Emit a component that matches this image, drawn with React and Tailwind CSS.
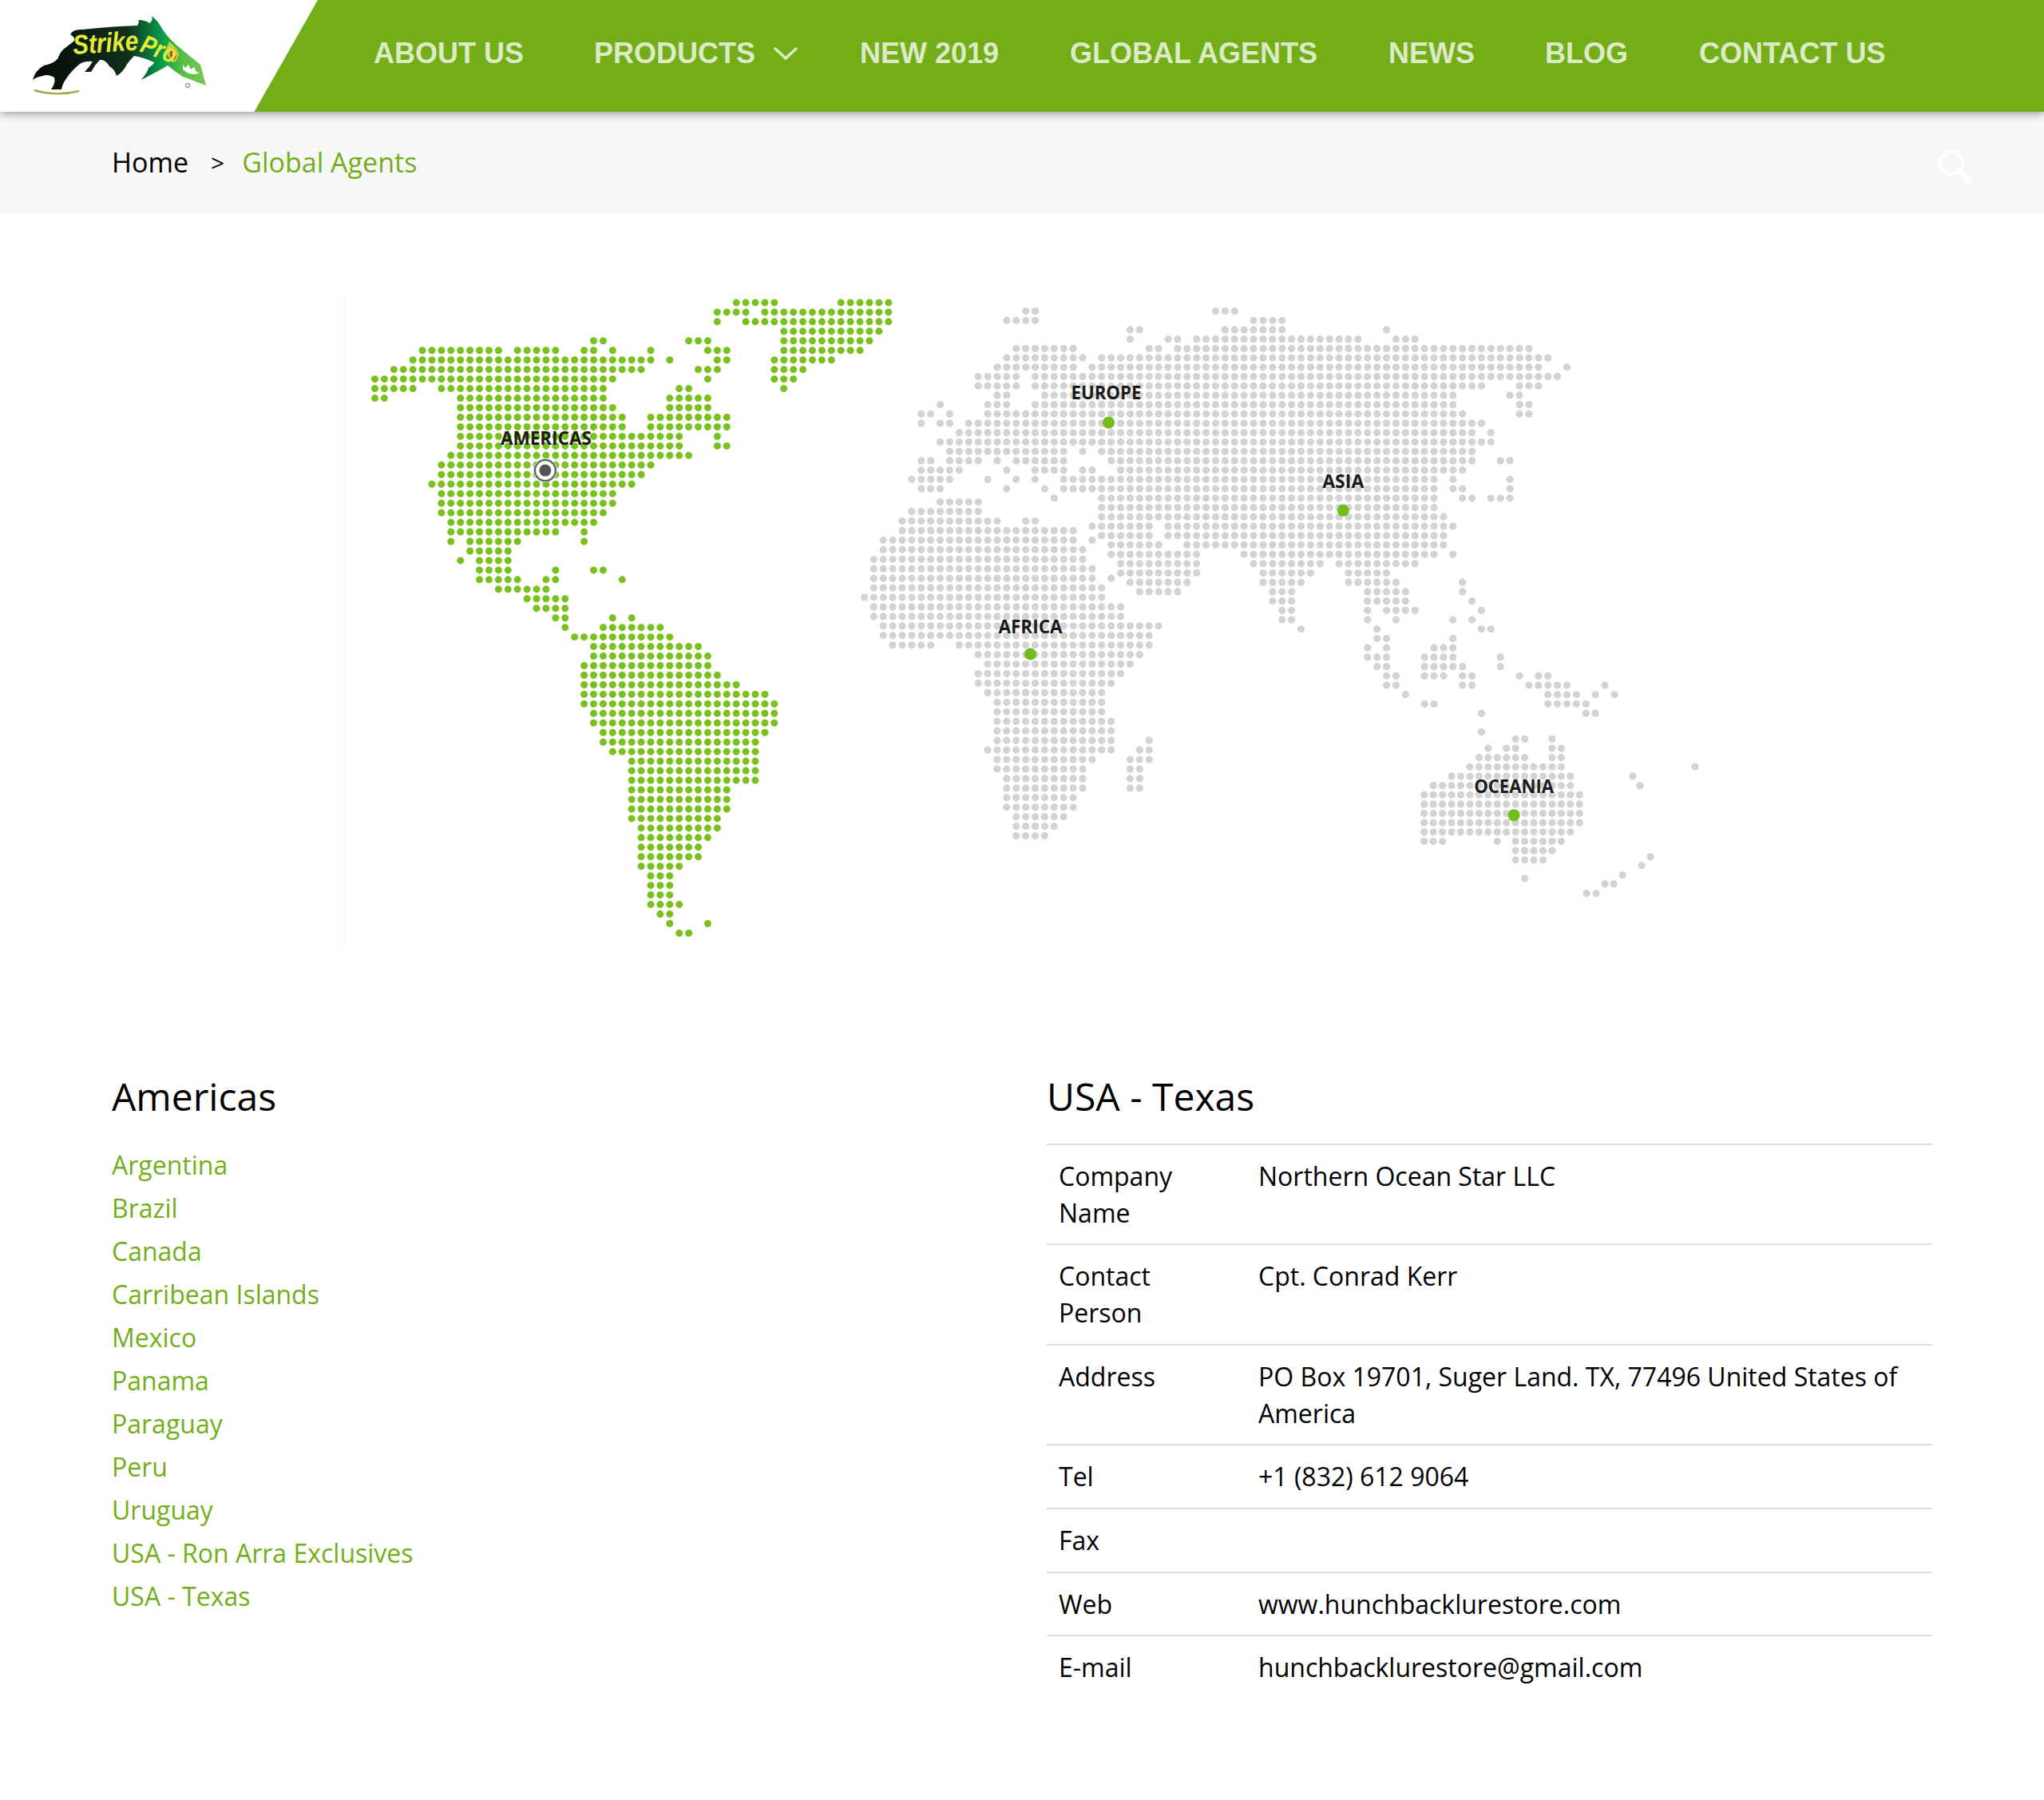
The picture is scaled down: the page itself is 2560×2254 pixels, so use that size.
import React from "react";

const NAV = [
  { label: "ABOUT US", ml: "ml-[70px]" },
  { label: "PRODUCTS", ml: "ml-[88px]", caret: true },
  { label: "NEW 2019", ml: "ml-[77px]" },
  { label: "GLOBAL AGENTS", ml: "ml-[89px]" },
  { label: "NEWS", ml: "ml-[89px]" },
  { label: "BLOG", ml: "ml-[88px]" },
  { label: "CONTACT US", ml: "ml-[89px]" },
];

const COUNTRIES = [
  "Argentina",
  "Brazil",
  "Canada",
  "Carribean Islands",
  "Mexico",
  "Panama",
  "Paraguay",
  "Peru",
  "Uruguay",
  "USA - Ron Arra Exclusives",
  "USA - Texas",
];

const DETAILS = [
  ["Company Name", "Northern Ocean Star LLC"],
  ["Contact Person", "Cpt. Conrad Kerr"],
  ["Address", "PO Box 19701, Suger Land. TX, 77496 United States of America"],
  ["Tel", "+1 (832) 612 9064"],
  ["Fax", ""],
  ["Web", "www.hunchbacklurestore.com"],
  ["E-mail", "hunchbacklurestore@gmail.com"],
];

// each row is a list of column runs, the first row sits at y0
const GREEN_ROWS = [
  "38-42 49-54", "36-39 41-54", "36 39-54", "43-53", "23-24 33-35 43-52",
  "5-13 15-19 22-23 25 29 35-37 43-51", "4-29 31 36-37 42-48", "2-28 34-36 42-45", "0-25 35 42-44",
  "0-4 7-24 32-33 43", "0-1 9-24 31-35", "9-25 31-35", "9-26 29-37", "9-26 29-37", "9-32 36", "9-32 36-37",
  "8-33", "7-29", "7-28", "6-27", "7-25", "7-25", "7-24", "8-23", "8-19 22", "8 10-15 22", "10-14", "9 11-14",
  "11-14 19 23-24", "11-15 18-19 26", "13-18", "16-20", "17-20", "19-20 25 27", "20 24-30", "21-31", "23-34",
  "23-35", "22-35", "22-36", "22-38", "22-41", "22-42", "23-42", "23-42", "24-41", "24-40", "25-40", "27-40",
  "27-40", "27-40", "27-37", "27-37", "27-37", "27-36", "28-36", "28-35", "28-34", "28-34", "28-32", "29-31",
  "29-31", "29-31", "29-32", "30-31", "31 35", "32-33",
];

const ASIA_ROWS = [
  "16-17 36-38", "14-17 40-43", "27-28 37-43 54", "27 31-32 34-51 55-57", "15-21 29-30 32-69", "14-22 24-71",
  "13-21 23-70 73", "11-15 17-72", "11-15 17-64 68-70", "13-14 18-61 67-68", "7 12-14 17-61 68-69",
  "5-6 8 12-62 68-69", "5 7-8 10-64", "9-63 65", "7-65", "8-20 22 24-63", "5-6 8-11 13 15-20 25-63 66-67",
  "5-9 14 17-20 22-23 26-62", "4-8 12 15 17 20-59 61 67", "5-7 14 18 20-59 61-62 67", "19 24-59 62-63 65-67",
  "24-59", "24-60", "23-29 31-61", "24-29 31-60", "25-30 33-60", "25-34 39-59 61", "26-34 40-47 49-57",
  "26-34 41-46 50-54", "27-33 41-45 50-55 62", "28-32 42-44 52-56 62", "42-44 52-56 63", "43-44 52 54-57 64",
  "43-44 52 55 61 63", "45 53 64-65", "53-54 61", "52 54 59-61", "52-54 58-61 66", "53-54 58-62 66",
  "54-55 58-60 62-63 68 70-71", "54-55 62-63 69-73 77", "56 71-74 76 78", "58-59 71-75", "64 75-76", "", "64",
];

const AFRICA_ROWS = [
  "7-11", "4-11", "3-13 16-17", "3-21", "1-21 23", "1-22", "0-22", "0-23", "0-23 25", "0-24", "0-24", "0-26",
  "0-26", "1-30", "1-29", "2-6 9-29", "11-28", "12-27", "11-26", "11-25", "12-24", "13-24", "13-24", "13-25",
  "13-25", "13-25 29", "12-25 28-29", "13-23 27-29", "13-22 27-28", "14-22 27-28", "14-22 27-28", "14-21",
  "14-21", "15-20", "15-19", "15-18",
];

const AUSTRALIA_ROWS = [
  "10-11 14", "7 9-10 14-15", "6-11 14-15", "5-15", "3-16", "1-16", "0-17", "0-17", "0-17", "0-17", "0-16",
  "0-2 8 10-15", "10-14", "10-13", "", "11",
];

const GRAY_EXTRA = [
  [1082, 748], [2123, 960], [2045, 972], [2054, 984], [2067, 1073], [2056, 1084],
  [2032, 1096], [2010, 1107], [2021, 1107], [1987, 1119], [1999, 1119],
];

const MARKERS = [
  [1388, 529],
  [1682, 639],
  [1290, 819],
  [1896, 1021],
];

const LABELS = [
  ["AMERICAS", 683, 557, 114],
  ["EUROPE", 1385, 500, 88],
  ["ASIA", 1682, 611, 52],
  ["AFRICA", 1290, 793, 80],
  ["OCEANIA", 1896, 993, 100],
];

function dotsFrom(rows, x0, y0, dx, dy) {
  const dots = [];
  rows.forEach((row, r) => {
    if (!row) return;
    row.split(" ").forEach((run) => {
      const [a, b] = run.split("-").map(Number);
      for (let c = a; c <= (b ?? a); c++) dots.push([x0 + c * dx, y0 + r * dy]);
    });
  });
  return dots;
}

const greenDots = dotsFrom(GREEN_ROWS, 468.5, 378.7, 11.92, 11.97);
const grayDots = [
  ...dotsFrom(ASIA_ROWS, 1093.7, 389.3, 11.9, 11.72),
  ...dotsFrom(AFRICA_ROWS, 1093.7, 628.5, 11.9, 11.95),
  ...dotsFrom(AUSTRALIA_ROWS, 1783.5, 925.5, 11.45, 11.65),
  ...GRAY_EXTRA,
];

function Logo() {
  return (
    <svg width="300" height="140" viewBox="0 0 300 140" className="block">
      <defs>
        <linearGradient id="fish" x1="0" x2="1" y1="0" y2="0">
          <stop offset="0" stopColor="#050806" />
          <stop offset="0.55" stopColor="#10301a" />
          <stop offset="0.74" stopColor="#069a48" />
          <stop offset="0.86" stopColor="#58bd45" />
          <stop offset="1" stopColor="#78c850" />
        </linearGradient>
      </defs>
      <path d="M43 113q28 8 56 1" fill="none" stroke="#a8a84a" strokeWidth="2.5" />
      <path
        fill="url(#fish)"
        d="M41 100Q44 88 55 82Q66 80 72 74Q75 66 79 62Q84 58 92 52Q96 48 88 43Q92 36 103 37Q140 33 172 32Q176 25 172 25Q183 25 187 29Q192 26 190 20Q198 26 203 36Q212 50 229 63L251 81L258 107L240 100L229 96Q217 88 210 82Q200 88 177 100Q185 90 186 85Q193 80 193 78Q180 72 168 70Q160 78 157 84Q152 92 146 95Q143 86 137 83Q132 74 125 75Q118 82 114 90L106 90Q112 84 116 77Q107 76 100 80Q90 88 84 97Q78 105 77 112L64 112Q70 104 68 97Q60 92 54 95Q46 96 41 100Z"
      />
      <path d="M212 52Q222 60 224 68Q222 78 216 78Q210 72 208 62Z" fill="#b6d83c" />
      <ellipse cx="217" cy="68" rx="4" ry="7" fill="#e6182c" />
      <circle cx="217" cy="67" r="1.4" fill="#fff" />
      <path d="M229 81 232 85 236 81 239 87 243 84 246 90 250 91 244 93 236 92 229 87Z" fill="#fff" />
      <text
        x="92"
        y="68"
        transform="rotate(-4 92 68)"
        fontFamily="'Liberation Sans', sans-serif"
        fontStyle="italic"
        fontWeight="700"
        fontSize="34"
        textLength="82"
        lengthAdjust="spacingAndGlyphs"
        fill="#e4ea3a"
      >
        Strike
      </text>
      <text
        x="174"
        y="64"
        transform="rotate(20 174 64)"
        fontFamily="'Liberation Sans', sans-serif"
        fontStyle="italic"
        fontWeight="700"
        fontSize="32"
        textLength="46"
        lengthAdjust="spacingAndGlyphs"
        fill="#e4ea3a"
      >
        Pro
      </text>
      <circle cx="235" cy="107" r="2.5" fill="none" stroke="#666" strokeWidth="1" />
    </svg>
  );
}

function WorldMap() {
  return (
    <svg width="1698" height="820" viewBox="431 367 1698 820" className="block border-l border-[#f5f5f5]">
      {grayDots.map(([x, y], i) => (
        <circle key={i} cx={x} cy={y} r="4.6" fill="#d3d3d3" />
      ))}
      {greenDots.map(([x, y], i) => (
        <circle key={i} cx={x} cy={y} r="4.5" fill="#7ac11f" />
      ))}
      {MARKERS.map(([x, y], i) => (
        <circle key={i} cx={x} cy={y} r="7.5" fill="#74bc1c" />
      ))}
      <circle cx="682" cy="589" r="15" fill="#fff" />
      <circle cx="682" cy="589" r="13" fill="#fff" stroke="#666" strokeWidth="2.5" />
      <circle cx="682" cy="589" r="7.5" fill="#555" />
      {LABELS.map(([name, x, y, w]) => (
        <text
          key={name}
          x={x}
          y={y}
          textAnchor="middle"
          textLength={w}
          lengthAdjust="spacingAndGlyphs"
          fontFamily="'Open Sans', sans-serif"
          fontWeight="700"
          fontSize="23"
          fill="#1a1a1a"
        >
          {name}
        </text>
      ))}
    </svg>
  );
}

export default function App() {
  return (
    <div className="min-h-[2254px] bg-white font-['Open_Sans',sans-serif] text-black">
      <header className="relative z-10 flex h-[140px] bg-[#73ae19] shadow-[0_3px_10px_rgba(0,0,0,0.35)]">
        <div className="w-[398px] shrink-0 bg-white [clip-path:polygon(0_0,100%_0,80%_100%,0_100%)]">
          <Logo />
        </div>
        <nav className="flex items-center pb-[6px] font-['Liberation_Sans',Arial,sans-serif] text-[36px] font-bold whitespace-nowrap text-white/75">
          {NAV.map((item) => (
            <a key={item.label} className={`flex items-center ${item.ml}`}>
              {item.label}
              {item.caret && (
                <svg width="32" height="20" viewBox="0 0 32 20" className="ml-[22px]" fill="none">
                  <path d="M2 3l14 13L30 3" stroke="currentColor" strokeWidth="3.5" />
                </svg>
              )}
            </a>
          ))}
        </nav>
      </header>

      <div className="flex h-[127px] items-center justify-between bg-[#f7f7f7] pr-[90px] pl-[140px]">
        <div className="flex items-center text-[34px]">
          <span>Home</span>
          <span className="mr-[22px] ml-[28px] text-[30px]">&gt;</span>
          <span className="text-[#73ae19]">Global Agents</span>
        </div>
        <svg width="44" height="44" viewBox="0 0 44 44" fill="none" className="mt-[8px]">
          <circle cx="18" cy="18" r="14" stroke="#fff" strokeWidth="4.5" />
          <path d="M28 28l13 13" stroke="#fff" strokeWidth="5" strokeLinecap="round" />
        </svg>
      </div>

      <div className="flex justify-center pt-[100px]">
        <WorldMap />
      </div>

      <div className="flex pt-[151px] pr-[140px] pl-[140px]">
        <div className="w-[1171px] shrink-0">
          <h2 className="text-[48px] leading-[70px]">Americas</h2>
          <ul className="mt-[24px] flex flex-col text-[32px] leading-[54px] text-[#73ae19]">
            {COUNTRIES.map((name) => (
              <li key={name}>{name}</li>
            ))}
          </ul>
        </div>
        <div className="flex-1">
          <h2 className="text-[48px] leading-[70px]">USA - Texas</h2>
          <table className="mt-[24px] w-full table-fixed border-collapse text-[32px] leading-[45.7px]">
            <tbody>
              {DETAILS.map(([label, value]) => (
                <tr key={label} className="border-t-2 border-[#dedede]">
                  <td className="w-[250px] px-[15px] py-[16px] align-top">{label}</td>
                  <td className="px-[15px] py-[16px] align-top">{value || "\u00a0"}</td>
                </tr>
              ))}
            </tbody>
          </table>
        </div>
      </div>
    </div>
  );
}
